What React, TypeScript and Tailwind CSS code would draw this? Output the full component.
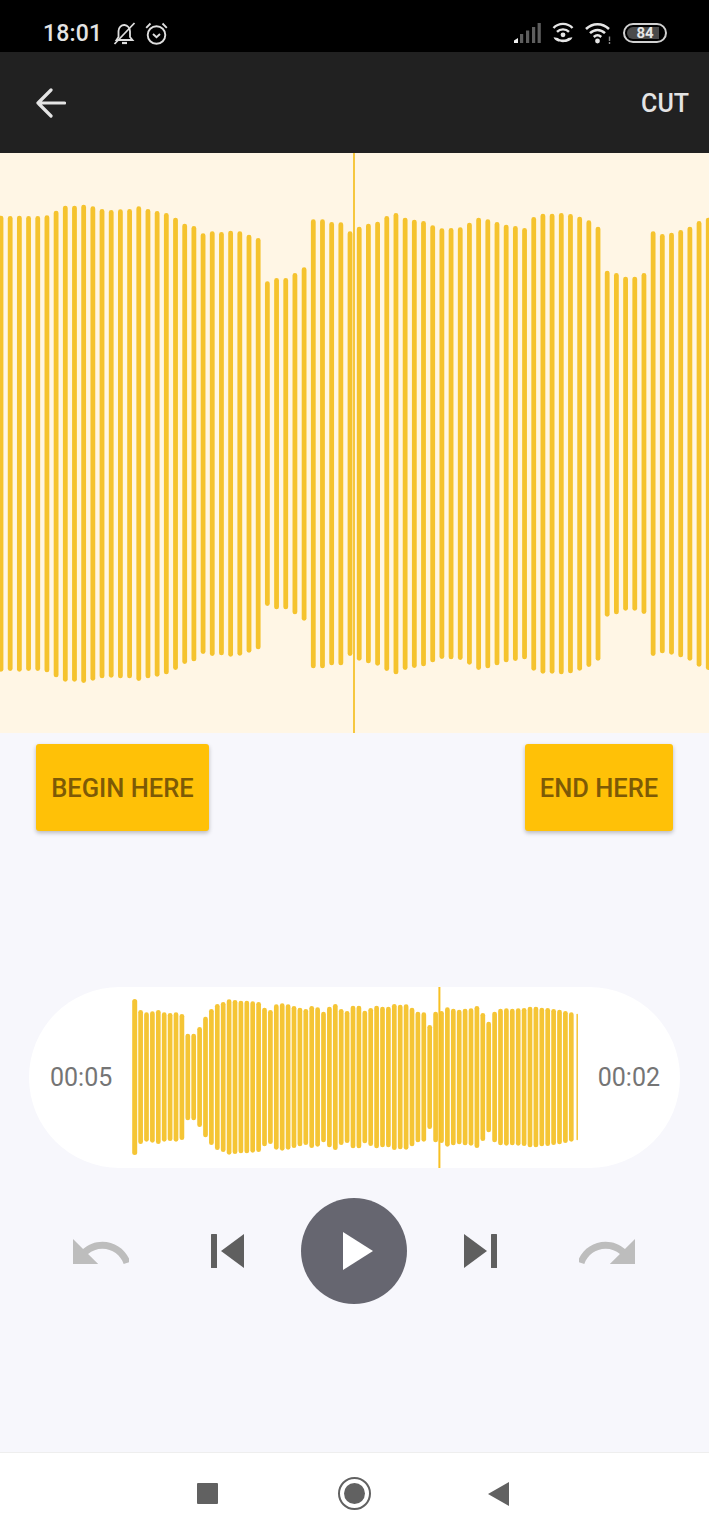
const bigTops = [77,78,77,78,78,76,62,47,47,44,49,57,60,58,57,49,57,63,69,83,101,108,130,124,126,122,124,134,144,274,264,264,249,232,88,88,96,97,124,110,101,95,78,69,83,89,93,106,115,114,112,98,83,88,96,104,108,114,81,71,71,69,72,80,91,110,242,249,260,260,249,124,132,128,120,110,93,83];
const bigBottoms = [245,243,245,243,243,247,262,275,275,279,272,265,263,265,265,273,265,260,253,240,222,214,192,198,196,200,197,188,178,48,58,58,73,92,235,235,226,226,198,212,220,227,243,253,240,234,229,217,207,208,210,224,240,235,226,217,213,208,242,251,251,253,250,242,231,212,80,73,62,62,72,198,190,194,202,212,230,240];
const miniTops = [42,75,82,79,75,82,84,82,87,146,146,126,95,72,57,51,43,45,47,47,49,51,68,75,58,55,58,63,68,72,63,67,80,65,57,72,78,62,62,77,69,62,65,65,57,59,58,68,80,82,120,80,78,67,71,74,71,70,63,84,110,80,71,70,71,70,69,65,65,68,69,72,74,78,82,86];

function BigWave() {
  return (
    <svg width="709" height="580" viewBox="0 153 709 580" className="block">
      {bigTops.map((t, i) => {
        const y1 = 190 + t / 3;
        const y2 = 590 + bigBottoms[i] / 3;
        const x = 1 + 9.185 * i;
        return <rect key={i} x={x - 2.4} y={y1} width="4.8" height={y2 - y1} rx="2.4" fill="#f5c32e" />;
      })}
      <rect x="353" y="153" width="2" height="580" fill="#f6c73f" />
    </svg>
  );
}

function MiniWave() {
  return (
    <svg width="448" height="181" viewBox="131 987 448 181" className="block shrink-0">
      {miniTops.map((t, i) => {
        const half = 276 - t;
        const y = 1077 - half / 3;
        const x = 134.7 + 5.9 * i;
        const w = i === 0 ? 5 : i === 75 ? 1.5 : 4.7;
        return <rect key={i} x={x - w / 2} y={y} width={w} height={(half * 2) / 3} rx={w / 2} fill="#f5c535" />;
      })}
      <rect x="438.4" y="987" width="2" height="181" fill="#f8c023" />
    </svg>
  );
}

function BellOff() {
  return (
    <svg width="23" height="23" viewBox="0 0 23 23" fill="none" stroke="#dedede" strokeWidth="1.8" className="block">
      <path d="M3.500 18h16l-2.500-3V9.500C17 6 14.500 3.200 11.500 3 8.300 2.800 5.600 5.500 5.500 9v6L3.500 18z" />
      <path d="M9 21h5" strokeWidth="2.200" />
      <path d="M1.500 22 21.500 1" />
    </svg>
  );
}

function Alarm() {
  return (
    <svg width="23" height="23" viewBox="0 0 23 23" fill="none" stroke="#dedede" strokeWidth="1.9" className="block">
      <circle cx="11.500" cy="13" r="8.800" />
      <path d="M1.200 5.800 5.500 1.500M21.800 5.800l-4.300-4.300" />
      <path d="M8 12l3.500 3.300L15 12" />
    </svg>
  );
}

function Signal() {
  return (
    <svg width="27" height="20" viewBox="0 0 27 20" className="block">
      <path d="M0 20v-2.500L4 15v5z" fill="#f0f0f0" />
      <rect x="6" y="11" width="3.200" height="9" fill="#5e5e5e" />
      <rect x="12" y="7.500" width="3.200" height="12.500" fill="#5e5e5e" />
      <rect x="18" y="4" width="3.200" height="16" fill="#5e5e5e" />
      <rect x="23.600" y="0" width="3.200" height="20" fill="#5e5e5e" />
    </svg>
  );
}

function Hotspot() {
  return (
    <svg width="22" height="22" viewBox="0 0 22 22" fill="none" stroke="#e6e6e6" strokeWidth="2.400" className="block">
      <path d="M1.500 6C6.500 .5 15.500 .5 20.500 6" />
      <path d="M5 9.800c3.200-3.300 8.800-3.300 12 0" />
      <circle cx="11" cy="12.800" r="2.400" fill="#e6e6e6" stroke="none" />
      <path d="M1.600 15.200c2 6.600 16.800 6.600 18.800 0l-4.400 .8c-1.500 2-8.500 2-10 0z" fill="#e6e6e6" stroke="none" />
    </svg>
  );
}

function Wifi() {
  return (
    <svg width="27" height="22" viewBox="0 0 27 22" fill="none" stroke="#e6e6e6" strokeWidth="2.500" className="block">
      <path d="M1 7c6.500-6.500 16.500-6.500 23 0" />
      <path d="M5 11.200c4.500-4.400 10.500-4.400 15 0" />
      <path d="M8.800 15c2.300-2.200 5.100-2.200 7.400 0" />
      <circle cx="12.500" cy="19" r="2.400" fill="#e6e6e6" stroke="none" />
      <path d="M24.500 14.500v4.500M24.500 20v2" stroke="#8a8a8a" strokeWidth="1.400" />
    </svg>
  );
}

function Battery() {
  return (
    <div className="relative w-[44px] h-[20px] rounded-full border-2 border-[#d0d0d0] flex items-center justify-center">
      <div className="absolute left-[2px] top-[2px] bottom-[2px] w-[32px] rounded-l-full bg-[#4a4a4a]" />
      <span className="relative text-[15px] leading-none font-bold text-[#e6e6e6]">84</span>
    </div>
  );
}

function Undo({ flip }: { flip?: boolean }) {
  return (
    <svg width="56" height="25" viewBox="2 7 20 9" preserveAspectRatio="none" className={flip ? "block -scale-x-100" : "block"}>
      <path
        d="M12.500 8c-2.650 0-5.050.990-6.900 2.600L2 7v9h9l-3.620-3.620c1.390-1.160 3.160-1.880 5.120-1.880 3.540 0 6.550 2.310 7.600 5.500l2.370-.780C21.080 11.030 17.150 8 12.500 8z"
        fill="#bdbdbd"
      />
    </svg>
  );
}

function Skip({ flip }: { flip?: boolean }) {
  return (
    <svg width="33" height="34" viewBox="0 0 33 34" className={flip ? "block -scale-x-100" : "block"}>
      <rect x="0" y="0" width="6" height="34" rx="0.500" fill="#5f5f5f" />
      <path d="M33 0v34L10 17z" fill="#5f5f5f" />
    </svg>
  );
}

export default function App() {
  return (
    <div className="w-[709px] h-[1536px] flex flex-col overflow-hidden bg-[#f7f7fc] font-['Roboto',sans-serif]">
      <div className="h-[52px] bg-black flex items-center pl-[43px] pr-[42px] pt-[14px] shrink-0">
        <span className="text-[23px] leading-none font-medium text-[#e4e4e4] mr-[11px] tracking-[0.2px]">18:01</span>
        <BellOff />
        <div className="ml-[9px]"><Alarm /></div>
        <div className="ml-auto"><Signal /></div>
        <div className="ml-[11px]"><Hotspot /></div>
        <div className="ml-[11px]"><Wifi /></div>
        <div className="ml-[11px]"><Battery /></div>
      </div>

      <div className="h-[101px] bg-[#212121] flex items-center justify-between pl-[36px] pr-[20px] shrink-0">
        <svg width="30" height="30" viewBox="0 0 30 30" fill="none" stroke="#e4e4e4" strokeWidth="3.200" strokeLinecap="round" strokeLinejoin="round" className="block">
          <path d="M28.500 15H2M15 2 2 15l13 13" />
        </svg>
        <span className="text-[25px] leading-none font-medium text-[#e4e4e4] pt-[2px]">CUT</span>
      </div>

      <div className="h-[580px] bg-[#fff6e5] shrink-0">
        <BigWave />
      </div>

      <div className="flex-1 flex flex-col">
        <div className="flex justify-between pl-[36px] pr-[36px] pt-[11px]">
          <button className="w-[173px] h-[87px] pt-[2px] rounded-[3px] bg-[#ffc107] shadow-[0_2px_4px_rgba(0,0,0,0.25)] text-[25.500px] font-medium text-[#7d5a06]">BEGIN HERE</button>
          <button className="w-[148px] h-[87px] pt-[2px] rounded-[3px] bg-[#ffc107] shadow-[0_2px_4px_rgba(0,0,0,0.25)] text-[25.500px] font-medium text-[#7d5a06]">END HERE</button>
        </div>

        <div className="mt-[156px] mx-[29px] w-[651px] h-[181px] rounded-full bg-white flex items-center justify-between pl-[21px] pr-[20px] text-[25px] text-[#757575]">
          <span>00:05</span>
          <MiniWave />
          <span>00:02</span>
        </div>

        <div className="mt-[30px] pl-[73px] flex items-center">
          <Undo />
          <div className="ml-[82px]"><Skip /></div>
          <button className="ml-[57px] w-[106px] h-[106px] rounded-full bg-[#666670] flex items-center justify-center">
            <svg width="30" height="38" viewBox="0 0 30 38" className="block ml-[7px]">
              <path d="M0 0l30 19L0 38z" fill="#ffffff" />
            </svg>
          </button>
          <div className="ml-[57px]"><Skip flip /></div>
          <div className="ml-[82px]"><Undo flip /></div>
        </div>
      </div>

      <div className="h-[84px] bg-white border-t border-[#eeeeee] flex items-center pl-[197px] pb-[2px] shrink-0">
        <div className="w-[21px] h-[21px] bg-[#616161] rounded-[1px]" />
        <div className="ml-[120px] w-[33px] h-[33px] rounded-full border-[2.500px] border-[#616161] flex items-center justify-center">
          <div className="w-[21px] h-[21px] rounded-full bg-[#616161]" />
        </div>
        <svg width="21" height="24" viewBox="0 0 21 24" className="block ml-[117px]">
          <path d="M21 0v24L0 12z" fill="#616161" />
        </svg>
      </div>
    </div>
  );
}
